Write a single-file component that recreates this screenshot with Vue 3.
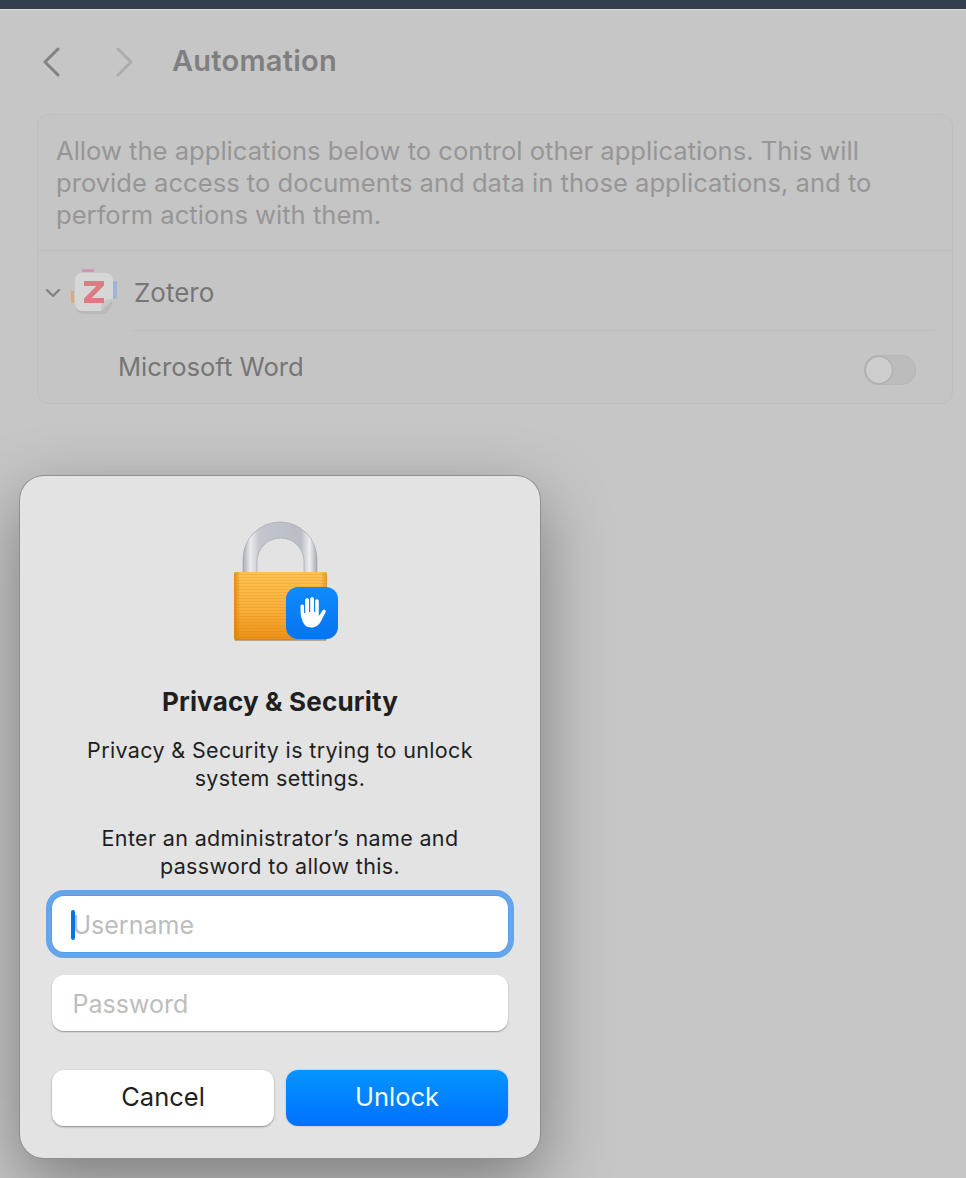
<script setup>
const nav = { title: 'Automation' };
const description = 'Allow the applications below to control other applications. This will provide access to documents and data in those applications, and to perform actions with them.';
</script>

<template>
  <div class="page">
    <div class="topbar"></div>
    <header class="header">
      <svg class="chev" width="18" height="30" viewBox="0 0 18 30">
        <path d="M16 2 L3 15 L16 28" fill="none" stroke="#838383" stroke-width="3" stroke-linecap="round" stroke-linejoin="round" />
      </svg>
      <svg class="chev chev-next" width="18" height="30" viewBox="0 0 18 30">
        <path d="M2 2 L15 15 L2 28" fill="none" stroke="#adadad" stroke-width="3" stroke-linecap="round" stroke-linejoin="round" />
      </svg>
      <h1>{{ nav.title }}</h1>
    </header>

    <section class="card">
      <p class="desc">{{ description }}</p>
      <div class="app-row">
        <svg class="disclosure" width="16" height="10" viewBox="0 0 16 10">
          <path d="M2 2 L8 8 L14 2" fill="none" stroke="#838383" stroke-width="2.4" stroke-linecap="round" stroke-linejoin="round" />
        </svg>
        <svg class="zotero" width="48" height="48" viewBox="0 0 48 48">
          <rect x="11" y="0" width="12" height="3" fill="#d196ad" />
          <rect x="0" y="22" width="3" height="12" fill="#e0a77f" />
          <rect x="42" y="12" width="4" height="18" rx="1" fill="#9fb4d6" />
          <rect x="33" y="33" width="7" height="7" fill="#d9cc95" transform="rotate(45 36 36)" />
          <path d="M4 34 Q4 45 13 45 H30 Q38 45 41 36 V30 L30 42 H12 Q6 42 4 34Z" fill="#b9b9b9" />
          <path d="M11 4 H34 Q42 4 42 12 V30 L30 42 H12 Q4 42 4 34 V11 Q4 4 11 4Z" fill="#d6d6d6" />
          <path d="M30 42 L42 30 Q34 30 32 33 Q30 36 30 42Z" fill="#c6c6c6" />
          <path d="M13 12 H33 V16.500 L20.500 29 H33 V34 H13 V29.500 L25.500 17 H13Z" fill="#dd7b82" />
        </svg>
        <span class="app-name">Zotero</span>
      </div>
      <div class="sub-row">
        <span class="sub-name">Microsoft Word</span>
        <span class="toggle"><span class="knob"></span></span>
      </div>
    </section>

    <div class="dialog">
      <svg class="lock" width="114" height="124" viewBox="0 0 114 124">
        <defs>
          <linearGradient id="shackle" x1="0" x2="1" y1="0" y2="0">
            <stop offset="0" stop-color="#a9adb3" />
            <stop offset="0.1" stop-color="#e9ebee" />
            <stop offset="0.22" stop-color="#c3c7cd" />
            <stop offset="0.78" stop-color="#b9bdc4" />
            <stop offset="0.9" stop-color="#eceef0" />
            <stop offset="1" stop-color="#a7abb1" />
          </linearGradient>
          <linearGradient id="body" x1="0" x2="0" y1="0" y2="1">
            <stop offset="0" stop-color="#fdc352" />
            <stop offset="0.55" stop-color="#f9b03a" />
            <stop offset="1" stop-color="#ec9016" />
          </linearGradient>
          <linearGradient id="side" x1="0" x2="1" y1="0" y2="0">
            <stop offset="0" stop-color="#d67f10" stop-opacity=".8" />
            <stop offset="0.07" stop-color="#d67f10" stop-opacity="0" />
            <stop offset="0.93" stop-color="#d67f10" stop-opacity="0" />
            <stop offset="1" stop-color="#d67f10" stop-opacity=".6" />
          </linearGradient>
          <linearGradient id="badge" x1="0" x2="0" y1="0" y2="1">
            <stop offset="0" stop-color="#0f8bfd" />
            <stop offset="1" stop-color="#0573ef" />
          </linearGradient>
          <pattern id="stripes" width="4" height="3" patternUnits="userSpaceOnUse">
            <rect width="4" height="1" fill="#c77c10" opacity=".18" />
          </pattern>
        </defs>
        <path d="M17 54 V39 A37 37 0 0 1 91 39 V54 H78 V41.500 A23.500 23.500 0 0 0 31 41.500 V54Z" fill="url(#shackle)" stroke="#9da1a7" stroke-width=".6" />
        <rect x="8" y="52" width="93" height="68" rx="2" fill="url(#body)" />
        <rect x="8" y="52" width="93" height="68" rx="2" fill="url(#stripes)" />
        <rect x="8" y="52" width="93" height="68" rx="2" fill="url(#side)" />
        <rect x="9" y="119.500" width="91" height="1.500" fill="#9a6a22" opacity=".5" />
        <rect x="60" y="67" width="52" height="52" rx="12" fill="url(#badge)" />
        <path d="M78 104 C75.500 100 74.500 95 74.500 90 V86 C74.500 84 78 84 78 86 V93 H79.200 V80 C79.200 77.500 83 77.500 83 80 V92 H84.200 V79 C84.200 76.500 88 76.500 88 79 V92 H89.200 V81 C89.200 78.500 92.800 78.500 92.800 81 V96 L96.500 90.500 C97.800 88.500 100.500 90 99.500 92.500 L95 101 C93 105 90 107.500 85.500 107.500 C82 107.500 79.500 106.500 78 104Z" fill="#fff" />
      </svg>

      <h2>Privacy &amp; Security</h2>
      <p class="msg">Privacy &amp; Security is trying to unlock<br />system settings.</p>
      <p class="msg msg-second">Enter an administrator’s name and<br />password to allow this.</p>

      <div class="field focused">
        <span class="caret"></span>
        <span class="placeholder">Username</span>
      </div>
      <div class="field">
        <span class="placeholder">Password</span>
      </div>

      <div class="actions">
        <button class="btn">Cancel</button>
        <button class="btn primary">Unlock</button>
      </div>
    </div>
  </div>
</template>

<style scoped>
.page {
  position: relative;
  width: 966px;
  height: 1178px;
  overflow: hidden;
  background: #c6c6c6;
  font-family: Inter, "Liberation Sans", sans-serif;
}
.topbar {
  height: 9px;
  background: #323e4b;
  border-bottom: 1px solid #d8d8d8;
}
.header {
  display: flex;
  align-items: center;
  height: 104px;
  padding-left: 42px;
}
.chev-next {
  margin-left: 56px;
}
h1 {
  margin: 0 0 3px 38px;
  font-size: 29px;
  font-weight: 600;
  color: #7f7f7f;
  letter-spacing: 0.25px;
}
.card {
  margin-left: 37px;
  width: 916px;
  height: 290px;
  box-sizing: border-box;
  border: 1px solid #bfbfbf;
  border-radius: 12px;
  background: #c5c5c5;
}
.desc {
  margin: 0;
  height: 136px;
  box-sizing: border-box;
  padding: 20px 60px 0 18px;
  font-size: 25.600px;
  line-height: 32px;
  color: #969696;
  border-bottom: 1px solid #bebebe;
}
.app-row {
  display: flex;
  align-items: center;
  height: 80px;
  box-sizing: border-box;
  padding: 3px 0 0 7px;
  position: relative;
}
.app-row::after {
  content: "";
  position: absolute;
  left: 95px;
  right: 18px;
  bottom: 0;
  height: 1px;
  background: #bebebe;
}
.disclosure {
  margin-right: 10px;
}
.zotero {
  margin-right: 15px;
}
.app-name {
  font-size: 26px;
  color: #767676;
}
.sub-row {
  display: flex;
  align-items: center;
  justify-content: space-between;
  height: 70px;
  padding: 0 36px 0 80px;
}
.sub-name {
  font-size: 25.600px;
  color: #767676;
}
.toggle {
  display: block;
  width: 52px;
  height: 30px;
  margin-top: 8px;
  border-radius: 15px;
  background: #bcbcbc;
  box-shadow: inset 0 0 0 1px #b6b6b6;
  position: relative;
}
.knob {
  position: absolute;
  left: 2px;
  top: 2px;
  width: 26px;
  height: 26px;
  border-radius: 50%;
  background: #cdcdcd;
  box-shadow: 0 0 2px rgba(0, 0, 0, 0.25);
}
.dialog {
  position: absolute;
  left: 20px;
  top: 476px;
  width: 520px;
  height: 682px;
  box-sizing: border-box;
  padding: 44px 32px 0;
  border-radius: 24px;
  background: #e3e3e3;
  box-shadow: 0 0 0 1px #8f8f8f, 0 24px 70px rgba(0, 0, 0, 0.38);
  text-align: center;
  color: #1f1f1f;
}
.lock {
  display: block;
  margin-left: 174px;
}
h2 {
  margin: 41px 0 0;
  font-size: 26px;
  line-height: 34px;
  font-weight: 700;
  letter-spacing: 0.18px;
}
.msg {
  margin: 17px 0 0;
  font-size: 21.500px;
  line-height: 28px;
  letter-spacing: 0.35px;
}
.msg-second {
  margin-top: 32px;
}
.field {
  position: relative;
  height: 56px;
  margin-top: 16px;
  box-sizing: border-box;
  padding: 2px 0 0 20.500px;
  display: flex;
  align-items: center;
  border-radius: 12px;
  background: #fff;
  box-shadow: 0 1px 1.500px rgba(0, 0, 0, 0.35);
}
.field + .field {
  margin-top: 23px;
}
.focused {
  box-shadow: 0 0 0 1px #5a9ee8, 0 0 0 6px #64a5ec;
}
.placeholder {
  font-size: 25px;
  color: #bdbdbd;
}
.caret {
  position: absolute;
  left: 19px;
  top: 14px;
  width: 4px;
  height: 30px;
  border-radius: 2px;
  background: #0a72e8;
}
.actions {
  display: flex;
  gap: 12px;
  margin-top: 39px;
}
.btn {
  flex: 1;
  height: 56px;
  border: none;
  padding: 0 0 4px;
  border-radius: 12px;
  background: #fff;
  box-shadow: 0 1px 2px rgba(0, 0, 0, 0.4);
  font-family: inherit;
  font-size: 25.500px;
  color: #1f1f1f;
}
.primary {
  background: linear-gradient(#0494ff, #0071ff);
  box-shadow: 0 0 2px rgba(0, 100, 255, 0.3);
  color: #f4faff;
}
</style>
